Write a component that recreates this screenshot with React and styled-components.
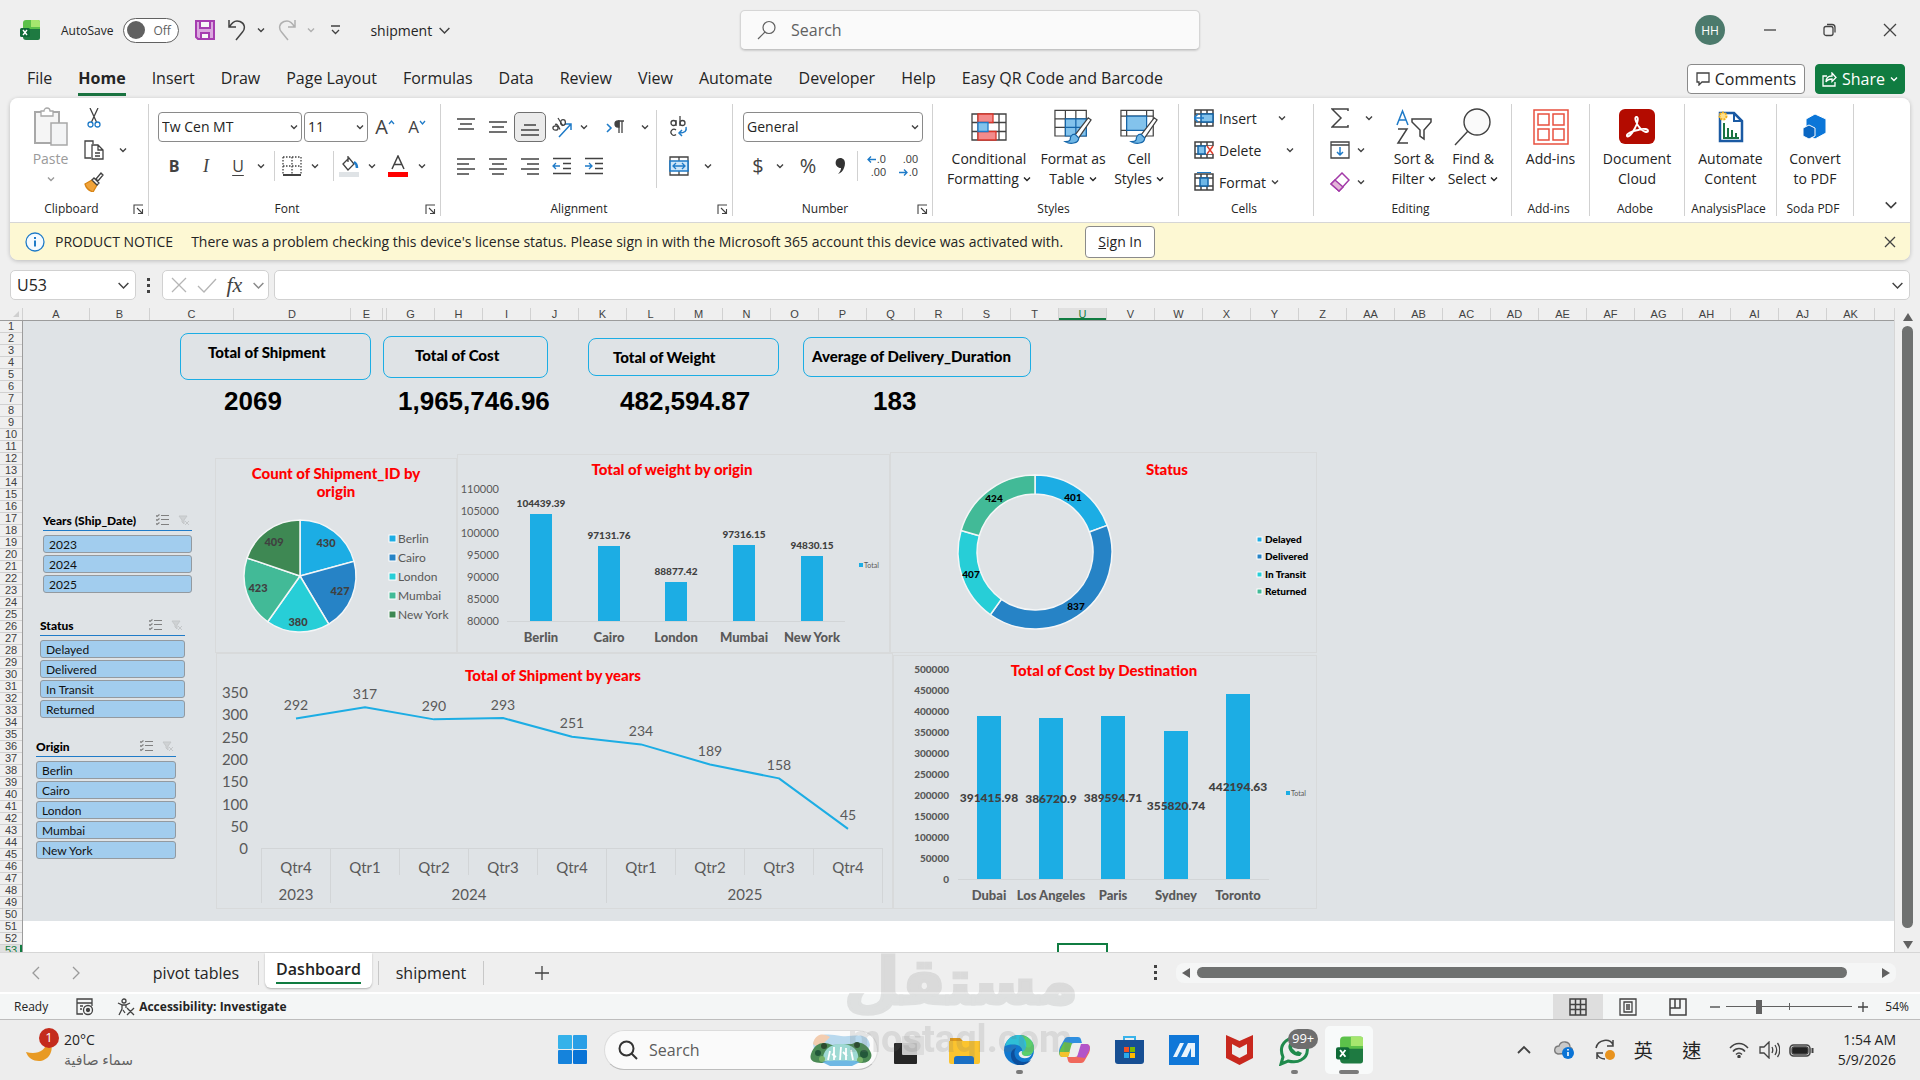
import React from "react";
import styled, { createGlobalStyle, css } from "styled-components";

const UI = '"Open Sans", "Noto Sans", "DejaVu Sans", "Noto Sans CJK TC", sans-serif';
const GEO = 'Lato, "Open Sans", sans-serif';

const Global = createGlobalStyle`
  *, *::before, *::after { box-sizing: border-box; }
  body { margin: 0; background: #efefef; color: #242424; font-family: ${UI}; font-size: 12px; overflow: hidden; }
  button, input, select { font: inherit; color: inherit; margin: 0; }
  button { background: none; border: 0; padding: 0; cursor: pointer; }
  h1, h2, ul { margin: 0; padding: 0; font-weight: inherit; list-style: none; }
  svg { display: block; flex: none; }
`;

const Page = styled.div`
  display: flex;
  flex-direction: column;
  height: 100vh;
  background: #efefef;
`;

/* ---------- shared icons ---------- */
const Svg = ({ w = 20, h = w, box, children, ...rest }) => (
  <svg width={w} height={h} viewBox={box || `0 0 ${w} ${h}`} fill="none" stroke="#424242" strokeWidth="1.3" aria-hidden="true" {...rest}>
    {children}
  </svg>
);
const Chev = ({ w = 8, color = "#424242" }) => (
  <Svg w={w} h={w} box="0 0 8 8" stroke={color} strokeWidth={w > 8 ? 0.9 : 1.4}>
    <path d="M1 2.5 4 5.5 7 2.5" />
  </Svg>
);
const ExcelLogo = ({ w = 20, h = 20 }) => (
  <Svg w={w} h={h} box="0 0 20 20" stroke="none">
    <path d="M6 0h12a2 2 0 0 1 2 2v9H3V3a3 3 0 0 1 3-3z" fill="#5cc14a" />
    <path d="M11 0h7a2 2 0 0 1 2 2v5h-9z" fill="#a6e66e" />
    <path d="M3 9h17v9a2 2 0 0 1-2 2H6a3 3 0 0 1-3-3z" fill="#1e7a41" />
    <rect x="0" y="8" width="10" height="9" rx="1.5" fill="#0f6a37" />
    <path d="M3 10l4 5M7 10l-4 5" stroke="#fff" strokeWidth="1.4" />
  </Svg>
);
const Undo = ({ color = "#424242", flip }) => (
  <Svg w={20} h={22} stroke={color} strokeWidth="1.5">
    <g transform={flip ? "matrix(-1 0 0 1 20 0)" : undefined}>
      <path d="M2 1v7h7M2.500 8C5 3 9 1 13 2.500c5 2 5.500 7 2.500 10.500L9 21" />
    </g>
  </Svg>
);
const HLines = ({ rows }) => (
  <Svg w={20} h={20} strokeWidth="1.4">
    {rows.map(([a, b, y]) => <path key={y} d={`M${a} ${y}H${b}`} />)}
  </Svg>
);

/* ---------- title bar ---------- */
const TitleBar = styled.header`
  display: grid;
  grid-template-columns: 1fr 460px 1fr;
  align-items: center;
  height: 60px;
  padding-left: 20px;
`;
const Quick = styled.div`
  display: flex;
  align-items: center;
  gap: 12px;
`;
const AutoSave = styled.label`
  display: flex;
  align-items: center;
  gap: 10px;
  margin: 0 4px 0 9px;
`;
const SwitchBox = styled.span`
  display: flex;
  align-items: center;
  gap: 8px;
  width: 56px;
  height: 25px;
  padding: 0 3px;
  border: 1px solid #616161;
  border-radius: 13px;
  background: #fff;
  color: #616161;
  input {
    appearance: none;
    width: 18px;
    height: 18px;
    border-radius: 50%;
    background: #616161;
  }
`;
const QuickButton = styled.button`
  display: flex;
  align-items: center;
  gap: 10px;
`;
const DocName = styled.button`
  display: flex;
  align-items: center;
  gap: 6px;
  margin-left: 11px;
  font-size: 14px;
`;
const SearchBox = styled.label`
  display: flex;
  align-items: center;
  gap: 14px;
  height: 40px;
  padding: 0 16px;
  border: 1px solid #d6d6d6;
  border-bottom-color: #c4c4c4;
  border-radius: 5px;
  background: #fafafa;
  box-shadow: 0 1px 2px rgba(0, 0, 0, 0.14);
  input {
    flex: 1;
    padding: 0;
    border: 0;
    outline: 0;
    background: none;
    font-size: 16px;
  }
  input::placeholder { color: #616161; opacity: 1; }
`;
const WindowTools = styled.div`
  display: flex;
  justify-content: flex-end;
  align-items: center;
`;
const Avatar = styled.button`
  width: 30px;
  height: 30px;
  margin-right: 15px;
  border-radius: 50%;
  background: #4c7a6c;
  color: #fff;
  font-size: 12px;
`;
const WindowButton = styled.button`
  display: flex;
  align-items: center;
  justify-content: center;
  width: 60px;
  height: 40px;
`;

/* ---------- menu tabs ---------- */
const TabBar = styled.nav`
  display: flex;
  align-items: center;
  height: 38px;
  padding: 0 15px 0 27px;
  gap: 26px;
`;
const MenuTab = styled.button`
  height: 34px;
  padding: 0;
  border-bottom: 3px solid ${(p) => (p.$active ? "#1a7340" : "transparent")};
  font-size: 16px;
  line-height: 32px;
  font-weight: ${(p) => (p.$active ? 700 : 400)};
  white-space: nowrap;
`;
const TabActions = styled.div`
  display: flex;
  gap: 10px;
  margin-left: auto;
`;
const ActionButton = styled.button`
  display: flex;
  align-items: center;
  justify-content: center;
  gap: 5px;
  width: ${(p) => (p.$primary ? 90 : 118)}px;
  height: 30px;
  border: 1px solid ${(p) => (p.$primary ? "#107c41" : "#8a8a8a")};
  border-radius: 4px;
  background: ${(p) => (p.$primary ? "#107c41" : "#fff")};
  color: ${(p) => (p.$primary ? "#fff" : "#242424")};
  font-size: 16px;
`;

/* ---------- ribbon ---------- */
const RibbonShell = styled.section`
  margin: 0 10px;
  border-radius: 8px;
  box-shadow: 0 1px 4px rgba(0, 0, 0, 0.22);
  overflow: hidden;
`;
const Ribbon = styled.div`
  display: flex;
  height: 124px;
  padding: 6px 0;
  background: #fff;
`;
const Group = styled.div`
  display: flex;
  flex-direction: column;
  flex: none;
  width: ${(p) => p.$w}px;
  border-right: 1px solid #d1d1d1;
`;
const GroupBody = styled.div`
  display: flex;
  flex: 1;
  justify-content: ${(p) => (p.$center ? "center" : "flex-start")};
  padding-left: ${(p) => p.$pad || 0}px;
`;
const GroupLabel = styled.div`
  display: flex;
  justify-content: center;
  align-items: center;
  height: 14px;
  padding-right: 4px;
  font-size: 12px;
  line-height: 14px;
  span { flex: 1; text-align: center; }
`;
const RibbonEnd = styled.div`
  display: flex;
  flex: 1;
  justify-content: flex-end;
  align-items: flex-end;
  padding: 0 12px 4px 0;
`;
const Stack = styled.div`
  display: flex;
  flex-direction: column;
  gap: ${(p) => p.$gap || 0}px;
  padding-top: ${(p) => p.$top || 0}px;
`;
const Line = styled.div`
  display: flex;
  align-items: center;
  height: ${(p) => p.$h || 39}px;
`;
const Tool = styled.button`
  display: flex;
  align-items: center;
  justify-content: ${(p) => (p.$start ? "flex-start" : "center")};
  gap: ${(p) => p.$gap || 0}px;
  flex: none;
  width: ${(p) => p.$w || 32}px;
  height: 30px;
  font-size: 14px;
  white-space: nowrap;
  ${(p) => p.$on && css`
    border: 1px solid #707070;
    border-radius: 5px;
    background: #ebebeb;
  `}
`;
const Glyph = styled.span`
  font-size: ${(p) => p.$size || 16}px;
  line-height: 20px;
  font-weight: ${(p) => (p.$bold ? 700 : 400)};
  font-style: ${(p) => (p.$italic ? "italic" : "normal")};
  font-family: ${(p) => (p.$serif ? '"Liberation Serif", serif' : "inherit")};
  text-decoration: ${(p) => (p.$underline ? "underline" : "none")};
  text-underline-offset: 3px;
  color: #424242;
`;
const Rule = styled.i`
  width: 1px;
  height: ${(p) => p.$h || 30}px;
  margin: 0 6px;
  background: #d1d1d1;
`;
const Combo = styled.label`
  display: flex;
  align-items: center;
  flex: none;
  width: ${(p) => p.$w}px;
  height: 30px;
  margin-right: 2px;
  padding: 0 3px;
  border: 1px solid #8a8a8a;
  border-radius: 4px;
  background: #fff;
  select {
    flex: 1;
    min-width: 0;
    appearance: none;
    border: 0;
    outline: 0;
    padding: 0;
    background: none;
    font-size: 14px;
  }
`;
const BigTool = styled.button`
  display: flex;
  flex-direction: column;
  align-items: center;
  flex: none;
  width: ${(p) => p.$w}px;
  height: 86px;
  font-size: 14px;
  line-height: 20px;
  color: ${(p) => (p.$off ? "#9a9a9a" : "#242424")};
`;
const BigIcon = styled.span`
  display: flex;
  align-items: center;
  justify-content: center;
  height: 45px;
`;
const WithChev = styled.span`
  display: flex;
  align-items: center;
  gap: 4px;
  height: 20px;
  white-space: nowrap;
`;

const Launcher = () => (
  <Svg w={11} h={11} strokeWidth="1.1">
    <path d="M1 10V1h9M4 4l5.500 5.500M9.500 5v4.500H5" />
  </Svg>
);
const RibbonGroup = ({ w, pad, center, label, launch, children }) => (
  <Group $w={w}>
    <GroupBody $pad={pad} $center={center}>{children}</GroupBody>
    <GroupLabel>
      <span>{label}</span>
      {launch && <button aria-label={`${label} settings`}><Launcher /></button>}
    </GroupLabel>
  </Group>
);
const ChevTool = ({ w = 20, label }) => (
  <Tool $w={w} aria-label={label}><Chev /></Tool>
);
const Big = ({ w, icon, a, b, chev, off }) => (
  <BigTool $w={w} $off={off}>
    <BigIcon>{icon}</BigIcon>
    <span>{a}</span>
    {(b || chev) && <WithChev>{b}{chev && <Chev color={off ? "#9a9a9a" : "#242424"} />}</WithChev>}
  </BigTool>
);

const PasteIcon = () => (
  <Svg w={34} h={40} stroke="#a8a8a8">
    <path d="M1 5h24v31H1z" fill="#f5f5f5" strokeWidth="2" />
    <path d="M7 9V4h3a3 3 0 0 1 6 0h3v5z" fill="#fff" />
    <path d="M17 16h16v22H17z" fill="#f3f4f5" strokeWidth="1.500" />
  </Svg>
);
const CutIcon = () => (
  <Svg w={14} h={20}>
    <path d="M3 0l6.500 14M11 0L4.500 14" />
    <circle cx="3.500" cy="16.500" r="2.500" stroke="#1f7bc8" />
    <circle cx="10.500" cy="16.500" r="2.500" stroke="#1f7bc8" />
  </Svg>
);
const CopyIcon = () => (
  <Svg w={20} h={20}>
    <path d="M7 18H1V1h8v3" />
    <path d="M8 5h6l5 5v9H8zM14 5v5h5M11 13h5M11 16h5" fill="#fff" />
  </Svg>
);
const BrushIcon = () => (
  <Svg w={20} h={20}>
    <path d="M1 12l7-4 5 5-4 7c-3-1-7-4-8-8z" fill="#f0a33a" stroke="#d88414" />
    <path d="M8 8l2-2 5 5-2 2zM12 7l5-6 2 2-5 6z" fill="#fff" />
  </Svg>
);
const GridIcon = () => (
  <Svg w={20} h={20} strokeDasharray="1.500 1.500">
    <path d="M1 1h18v17M1 1v17M10 1v17M1 10h18" />
    <path d="M1 19h18" strokeDasharray="none" strokeWidth="2" />
  </Svg>
);
const FillIcon = () => (
  <Svg w={20} h={22}>
    <path d="M4 9l6-6 5 6-6 6zM9 1v6" />
    <path d="M15 7c2 1 3 4 3 6" stroke="#1f7bc8" strokeWidth="2.500" />
    <path d="M0 17h20v5H0z" fill="#dfe3e6" stroke="none" />
  </Svg>
);
const FontColorIcon = () => (
  <Svg w={20} h={22}>
    <path d="M4 14L10 1l6 13M6 9.500h8" strokeWidth="1.500" />
    <path d="M0 17h20v5H0z" fill="#ff0000" stroke="none" />
  </Svg>
);
const OrientIcon = () => (
  <Svg w={22} h={22}>
    <path d="M8 21L20 8M20 14V8h-6" stroke="#1f7bc8" strokeWidth="1.500" />
    <ellipse cx="4.500" cy="12" rx="2.600" ry="2.200" />
    <path d="M4 8.500c2-1 3 1 5 5" />
    <path d="M7 2l5 8" />
    <ellipse cx="12" cy="6.500" rx="2.400" ry="2.800" />
  </Svg>
);
const ParaIcon = () => (
  <Svg w={18} h={18}>
    <path d="M1 6l4 4-4 4" stroke="#1f7bc8" strokeWidth="1.600" />
    <path d="M12 3a3 3 0 0 0 0 6h1V3z" fill="#424242" />
    <path d="M18 3h-6M13 3v12M16 3v12" />
  </Svg>
);
const WrapIcon = () => (
  <Svg w={20} h={22}>
    <circle cx="4.500" cy="7" r="2.500" /><path d="M7 4v6M11 0v10" />
    <circle cx="13.500" cy="7" r="2.500" /><path d="M7 14a3 3 0 1 0 0 4.500" />
    <path d="M17 11c1 4-1 6-7 6M13 14l-3 3 3 3" stroke="#1f7bc8" strokeWidth="1.500" />
  </Svg>
);
const MergeIcon = () => (
  <Svg w={20} h={20}>
    <path d="M1 1h18v18H1zM10 1v4M10 15v4" />
    <path d="M1 5h18v10H1z" fill="#cfe6f8" stroke="#1f7bc8" strokeWidth="1.600" />
    <path d="M4 10h12M7 7l-3 3 3 3M13 7l3 3-3 3" stroke="#1f7bc8" />
  </Svg>
);
const IndentIcon = ({ right }) => (
  <Svg w={20} h={20}>
    <path d="M1 2.500h18M11 7.500h8M11 12.500h8M1 17.500h18" />
    <path d={right ? "M1 10h7M5 7l3 3-3 3" : "M8 10H1M4 7l-3 3 3 3"} stroke="#1f7bc8" />
  </Svg>
);
const DecimalMark = styled.span`
  display: grid;
  font: 11px/13px "Liberation Sans", sans-serif;
  color: #424242;
  span {
    display: flex;
    align-items: center;
    justify-content: flex-end;
    gap: 1px;
    width: 20px;
    height: 13px;
  }
`;
const SmallArrow = ({ right }) => (
  <Svg w={9} h={9} stroke="#1f7bc8"><path d={right ? "M0 4.500h8M5 1.500l3 3-3 3" : "M9 4.500H1M4 1.500l-3 3 3 3"} /></Svg>
);
const CondIcon = () => (
  <Svg w={36} h={28}>
    <path d="M1 1h34v26H1zM7 1v26M14 1v26M28 1v26M1 9.500h34M1 18.500h34" />
    <path d="M7 1h15v8.500H7zM7 18.500h18V27H7z" fill="#f28b8b" stroke="#d9362b" />
    <path d="M7 9.500h10v9H7z" fill="#83c3ec" stroke="#1f7bc8" />
  </Svg>
);
const BrushOver = () => (
  <g>
    <path d="M36 9L22 27l4 3L39 11z" fill="#fff" />
    <path d="M22 26c-4 0-5 4-5 6-1 2-3 2-5 2 5 3 14 2 14-4z" fill="#6fb7e6" stroke="#1565a8" />
  </g>
);
const TableIcon = () => (
  <Svg w={38} h={35} box="0 0 40 36">
    <path d="M1 1h33v27H1zM12 1v27M23 1v27M1 10h33M1 19h33" />
    <path d="M12 10h22v18H12z" fill="#83c3ec" stroke="#1565a8" />
    <path d="M23 10v18M12 19h22" stroke="#1565a8" />
    <BrushOver />
  </Svg>
);
const CellIcon = () => (
  <Svg w={38} h={35} box="0 0 40 36">
    <path d="M1 1h34v27H1zM7 1v27M1 7h34M28 1v6M1 22h8" />
    <path d="M7 7h21v15H7z" fill="#83c3ec" stroke="#1565a8" />
    <BrushOver />
  </Svg>
);
const CellsRow = ({ kind }) => (
  <Svg w={20} h={20} strokeWidth="1.500">
    <path d="M1 2h18v16H1zM7 2v4M13 2v4M7 14v4M13 14v4M1 6h18M1 14h18" />
    {kind === "insert" && <path d="M7 6h12v8H7z" fill="#83c3ec" stroke="#1565a8" />}
    {kind === "insert" && <path d="M10 10H1M4 6l-4 4 4 4" stroke="#1f7bc8" />}
    {kind === "delete" && <path d="M12 6h9v8h-9z" fill="#fff" stroke="none" />}
    {kind === "delete" && <path d="M4 6h7v8H4z" fill="#83c3ec" stroke="#1565a8" />}
    {kind === "delete" && <path d="M13 6l6 8M19 6l-6 8" stroke="#e0402f" />}
    {kind === "format" && <path d="M6 6h8v8H6z" fill="#6fb7e6" stroke="#1565a8" />}
    {kind === "format" && <path d="M3 0h14" stroke="#1f7bc8" strokeWidth="2" />}
  </Svg>
);
const SortIcon = () => (
  <Svg w={36} h={36} strokeWidth="1.500">
    <path d="M1 16L6.500 2 12 16M3 11h7" stroke="#1f7bc8" />
    <path d="M2 20h9L2 34h10" />
    <path d="M16 10h19v3l-7 8v9l-4-3v-6l-8-8z" />
  </Svg>
);
const FindIcon = () => (
  <Svg w={38} h={38} strokeWidth="1.400">
    <circle cx="23" cy="14" r="13" fill="#fafafa" />
    <path d="M14 23L1 37" />
  </Svg>
);
const AddinsIcon = () => (
  <Svg w={36} h={36} stroke="#e8503f" strokeWidth="1.500">
    <path d="M1 1h34v34H1zM5 5h11v11H5zM20 5h11v11H20zM5 20h11v11H5zM20 20h11v11H20z" />
  </Svg>
);
const AcrobatIcon = () => (
  <Svg w={36} h={35}>
    <rect width="36" height="35" rx="6" fill="#b30b00" stroke="none" />
    <path d="M17 8c3-1 2 6-1 11-3 6-7 10-8 8s5-5 11-6c6-2 10-1 10 1s-5 1-8-3c-3-3-6-10-4-11z" stroke="#fff" strokeWidth="1.900" />
  </Svg>
);
const AutomateIcon = () => (
  <Svg w={26} h={32}>
    <path d="M2 2h14l8 8v20H2z" fill="#fff" stroke="#1b5aa3" strokeWidth="2.500" />
    <path d="M16 2v8h8" stroke="#1b5aa3" strokeWidth="2" />
    <path d="M6 12v15h15M10 27V17M14 27v-8M18 27v-5" stroke="#1a7340" strokeWidth="2" />
    <circle cx="5" cy="5" r="3.500" fill="#ffe08a" stroke="#f2b01e" strokeWidth="2" strokeDasharray="2 1" />
  </Svg>
);
const SodaIcon = () => (
  <Svg w={26} h={28} stroke="#fff" strokeWidth="1">
    <path d="M13 1l11 5v14l-11 6-9-5V6z" fill="#0b76d8" />
    <path d="M7 12l6 3v8l-6 3-6-3v-8z" fill="#0a66c2" />
  </Svg>
);

const RibbonBar = () => (
  <Ribbon>
    <RibbonGroup w={139} pad={7} label="Clipboard" launch>
      <Big w={67} off icon={<PasteIcon />} a="Paste" chev />
      <Stack $gap={4}>
        {[["Cut", <CutIcon key="c" />], ["Copy", <CopyIcon key="p" />], ["Format painter", <BrushIcon key="b" />]].map(([n, ic]) => (
          <Line key={n} $h={28}>
            <Tool $w={20} aria-label={n}>{ic}</Tool>
            {n === "Copy" && <ChevTool w={38} label="Copy options" />}
          </Line>
        ))}
      </Stack>
    </RibbonGroup>

    <RibbonGroup w={292} pad={9} label="Font" launch>
      <Stack $top={3}>
        <Line>
          <Combo $w={144}><select aria-label="Font"><option>Tw Cen MT</option></select><Chev /></Combo>
          <Combo $w={64}><select aria-label="Font size"><option>11</option></select><Chev /></Combo>
          <Tool $w={30} aria-label="Grow font"><Glyph $size={20}>A</Glyph><Svg w={7} h={16} stroke="#1f7bc8"><path d="M1 5l2.500-3L6 5" /></Svg></Tool>
          <Tool $w={34} aria-label="Shrink font"><Glyph $size={17}>A</Glyph><Svg w={7} h={16} stroke="#1f7bc8"><path d="M1 2l2.500 3L6 2" /></Svg></Tool>
        </Line>
        <Line>
          <Tool aria-label="Bold"><Glyph $bold>B</Glyph></Tool>
          <Tool aria-label="Italic"><Glyph $italic $serif $size={18}>I</Glyph></Tool>
          <Tool aria-label="Underline"><Glyph $underline>U</Glyph></Tool>
          <ChevTool w={14} label="Underline options" />
          <Rule />
          <Tool $w={22} aria-label="Borders"><GridIcon /></Tool>
          <ChevTool w={24} label="Border options" />
          <Rule $h={30} />
          <Tool $w={18} aria-label="Fill colour"><FillIcon /></Tool>
          <ChevTool w={28} label="Fill options" />
          <Tool $w={24} aria-label="Font colour"><FontColorIcon /></Tool>
          <ChevTool w={24} label="Font colour options" />
        </Line>
      </Stack>
    </RibbonGroup>

    <RibbonGroup w={292} pad={9} label="Alignment" launch>
      <Stack $top={3}>
        <Line>
          <Tool aria-label="Top align"><HLines rows={[[1, 19, 2], [4, 16, 7], [2, 18, 12]]} /></Tool>
          <Tool aria-label="Middle align"><HLines rows={[[1, 19, 5], [4, 16, 10], [1, 19, 15]]} /></Tool>
          <Tool $on aria-label="Bottom align"><HLines rows={[[4, 16, 8], [1, 19, 13], [1, 19, 18]]} /></Tool>
          <Tool aria-label="Orientation"><OrientIcon /></Tool>
          <ChevTool w={12} label="Orientation options" />
          <Tool $w={50} aria-label="Text direction"><ParaIcon /></Tool>
          <ChevTool w={10} label="Direction options" />
        </Line>
        <Line>
          <Tool aria-label="Align left"><HLines rows={[[1, 19, 3], [1, 13, 8], [1, 19, 13], [1, 13, 18]]} /></Tool>
          <Tool aria-label="Centre"><HLines rows={[[1, 19, 3], [4, 16, 8], [1, 19, 13], [4, 16, 18]]} /></Tool>
          <Tool aria-label="Align right"><HLines rows={[[1, 19, 3], [7, 19, 8], [1, 19, 13], [7, 19, 18]]} /></Tool>
          <Tool aria-label="Decrease indent"><IndentIcon /></Tool>
          <Tool aria-label="Increase indent"><IndentIcon right /></Tool>
        </Line>
      </Stack>
      <Stack $top={6}><Rule $h={78} /></Stack>
      <Stack $top={3}>
        <Line><Tool aria-label="Wrap text"><WrapIcon /></Tool></Line>
        <Line><Tool aria-label="Merge cells"><MergeIcon /></Tool><ChevTool w={26} label="Merge options" /></Line>
      </Stack>
    </RibbonGroup>

    <RibbonGroup w={200} pad={10} label="Number" launch>
      <Stack $top={3}>
        <Line>
          <Combo $w={180}><select aria-label="Number format"><option>General</option></select><Chev /></Combo>
        </Line>
        <Line>
          <Tool $w={30} aria-label="Currency"><Glyph $size={20}>$</Glyph></Tool>
          <ChevTool w={14} label="Currency options" />
          <Tool $w={42} aria-label="Percent"><Glyph $size={20}>%</Glyph></Tool>
          <Tool $w={22} aria-label="Comma"><Svg w={10} h={18} stroke="none"><path d="M5 1c5 0 6 5 4 10-1 3-3 5-6 6 2-2 3-4 3-6C-1 11-1 1 5 1z" fill="#333" /></Svg></Tool>
          <Rule />
          <Tool $w={24} aria-label="Increase decimal"><DecimalMark><span><SmallArrow />.0</span><span>.00</span></DecimalMark></Tool>
          <Tool $w={40} aria-label="Decrease decimal"><DecimalMark><span>.00</span><span><SmallArrow right />.0</span></DecimalMark></Tool>
        </Line>
      </Stack>
    </RibbonGroup>

    <RibbonGroup w={246} pad={8} label="Styles">
      <Big w={96} icon={<CondIcon />} a="Conditional" b="Formatting" chev />
      <Big w={72} icon={<TableIcon />} a="Format as" b="Table" chev />
      <Big w={60} icon={<CellIcon />} a="Cell" b="Styles" chev />
    </RibbonGroup>

    <RibbonGroup w={135} pad={15} label="Cells">
      <Stack $gap={4}>
        <Line $h={28}><Tool $w={84} $start $gap={5}><CellsRow kind="insert" />Insert</Tool><Chev /></Line>
        <Line $h={28}><Tool $w={92} $start $gap={5}><CellsRow kind="delete" />Delete</Tool><Chev /></Line>
        <Line $h={28}><Tool $w={90} $start $gap={5}><CellsRow kind="format" />Format<Chev /></Tool></Line>
      </Stack>
    </RibbonGroup>

    <RibbonGroup w={198} pad={16} label="Editing">
      <Stack $gap={4}>
        <Line $h={28}><Tool $w={20} aria-label="AutoSum"><Svg w={18} h={20} strokeWidth="1.500"><path d="M17 3V1H1l9 9-9 9h16v-2" /></Svg></Tool><ChevTool w={38} label="AutoSum options" /></Line>
        <Line $h={28}><Tool $w={20} aria-label="Fill"><Svg w={20} h={18}><path d="M1 1h18v16H1zM1 4h18" /><path d="M10 6v8M7 11l3 3 3-3" stroke="#1f7bc8" strokeWidth="1.500" /></Svg></Tool><ChevTool w={22} label="Fill options" /></Line>
        <Line $h={28}><Tool $w={20} aria-label="Clear"><Svg w={20} h={20} stroke="#a33aa8" strokeWidth="1.500"><path d="M12 1l7 7-10 11-8-7z" /><path d="M5 8l8 7-4 4-8-7z" fill="#e3b5d8" /></Svg></Tool><ChevTool w={22} label="Clear options" /></Line>
      </Stack>
      <Big w={52} icon={<SortIcon />} a="Sort &" b="Filter" chev />
      <Big w={66} icon={<FindIcon />} a="Find &" b="Select" chev />
    </RibbonGroup>

    <RibbonGroup w={78} center label="Add-ins"><Big w={76} icon={<AddinsIcon />} a="Add-ins" /></RibbonGroup>
    <RibbonGroup w={95} center label="Adobe"><Big w={90} icon={<AcrobatIcon />} a="Document" b="Cloud" /></RibbonGroup>
    <RibbonGroup w={92} center label="AnalysisPlace"><Big w={90} icon={<AutomateIcon />} a="Automate" b="Content" /></RibbonGroup>
    <RibbonGroup w={77} center label="Soda PDF"><Big w={76} icon={<SodaIcon />} a="Convert" b="to PDF" /></RibbonGroup>
    <RibbonEnd><button aria-label="Collapse ribbon"><Chev w={14} /></button></RibbonEnd>
  </Ribbon>
);

/* ---------- notice and formula bar ---------- */
const Notice = styled.div`
  display: flex;
  align-items: center;
  height: 38px;
  padding: 0 14px 0 15px;
  border-top: 1px solid #d6d6d6;
  background: #fdf8d3;
  font-size: 14px;
`;
const NoticeHead = styled.strong`
  margin: 0 18px 0 10px;
  font-weight: 400;
`;
const SignIn = styled.button`
  width: 70px;
  height: 32px;
  margin: 0 auto 0 22px;
  border: 1px solid #8a8a8a;
  border-radius: 4px;
  background: #fff;
`;
const FormulaBar = styled.div`
  display: flex;
  align-items: center;
  height: 30px;
  margin: 10px 10px 8px;
`;
const Field = styled.label`
  display: flex;
  align-items: center;
  flex: ${(p) => (p.$w ? "none" : 1)};
  width: ${(p) => (p.$w ? `${p.$w}px` : "auto")};
  height: 30px;
  padding: 0 5px 0 6px;
  border: 1px solid #d1d1d1;
  border-radius: 5px;
  background: #fff;
  input {
    flex: 1;
    min-width: 0;
    border: 0;
    outline: 0;
    padding: 0;
    background: none;
    font-size: 16px;
  }
`;
const FxBox = styled.div`
  display: flex;
  align-items: center;
  justify-content: space-between;
  width: 107px;
  height: 30px;
  margin-right: 5px;
  padding: 0 3px 0 8px;
  border: 1px solid #d1d1d1;
  border-radius: 5px;
  background: #fff;
`;
const Dots = styled.span`
  display: grid;
  gap: 3px;
  margin: 0 ${(p) => p.$r || 12}px 0 11px;
  i { width: 3px; height: 3px; background: #424242; }
`;

/* ---------- worksheet ---------- */
const ROW = 12;
const HEAD = 23;
const COLS = [["A", 67], ["B", 60], ["C", 84], ["D", 117], ["E", 32], ["", 4]].concat(
  ["G", "H", "I", "J", "K", "L", "M", "N", "O", "P", "Q", "R", "S", "T", "U", "V", "W", "X", "Y", "Z",
    "AA", "AB", "AC", "AD", "AE", "AF", "AG", "AH", "AI", "AJ", "AK"].map((c) => [c, 48])
);
const SELECTED_LEFT = COLS.slice(0, COLS.findIndex(([c]) => c === "U")).reduce((s, [, w]) => s + w, 0);

const Work = styled.main`
  display: flex;
  flex: 1;
  min-height: 0;
`;
const Sheet = styled.section`
  display: flex;
  flex-direction: column;
  flex: 1;
  min-width: 0;
  border-right: 1px solid #d6d6d6;
`;
const ColumnHeads = styled.div`
  display: flex;
  flex: none;
  height: 13px;
  overflow: hidden;
  border-bottom: 1px solid #9c9c9c;
`;
const Corner = styled.div`
  display: flex;
  align-items: flex-end;
  justify-content: flex-end;
  flex: none;
  width: ${HEAD}px;
  padding: 0 3px 3px 0;
  border-right: 1px solid #d1d1d1;
`;
const HeadCell = styled.div`
  flex: none;
  width: ${(p) => p.$w}px;
  border-right: 1px solid #d1d1d1;
  font: 11px/12px "Liberation Sans", sans-serif;
  text-align: center;
  color: ${(p) => (p.$on ? "#107c41" : "#424242")};
  background: ${(p) => (p.$on ? "#e0e0e0" : "transparent")};
  box-shadow: ${(p) => (p.$on ? "inset 0 -2px #107c41" : "none")};
`;
const SheetBody = styled.div`
  display: flex;
  flex: 1;
  min-height: 0;
  overflow: hidden;
`;
const RowHeads = styled.div`
  flex: none;
  width: ${HEAD}px;
  border-right: 1px solid #9c9c9c;
`;
const RowCell = styled.div`
  height: ${ROW}px;
  border-bottom: 1px solid #d1d1d1;
  font: 11px/11px "Liberation Sans", sans-serif;
  text-align: center;
  color: ${(p) => (p.$on ? "#107c41" : "#424242")};
  background: ${(p) => (p.$on ? "#e0e0e0" : "transparent")};
  box-shadow: ${(p) => (p.$on ? "inset -2px 0 #107c41" : "none")};
`;
const Cells = styled.div`
  position: relative;
  flex: 1;
  min-width: 0;
  overflow: hidden;
  background: #fff;
`;
const Filled = styled.div`
  display: flex;
  height: ${ROW * 50}px;
  background: #dfe3e6;
`;
const ActiveCell = styled.div`
  position: absolute;
  top: ${ROW * 52 - 2}px;
  left: ${SELECTED_LEFT - 2}px;
  width: 51px;
  height: 16px;
  border: 2px solid #107c41;
`;
const SlicerColumn = styled.aside`
  flex: none;
  width: 157px;
  padding: 189px 0 0 13px;
`;
const SlicerBox = styled.section`
  width: ${(p) => p.$w}px;
  margin: 0 0 ${(p) => p.$after}px ${(p) => p.$indent}px;
  font-family: ${GEO};
`;
const SlicerHead = styled.div`
  display: flex;
  align-items: center;
  gap: 9px;
  height: 21px;
  margin-bottom: 4px;
  padding-right: 1px;
  border-bottom: 1px solid #1f7bc8;
  h2 {
    flex: 1;
    color: #000;
    font-size: 12px;
    font-weight: 900;
    white-space: nowrap;
  }
`;
const SlicerItem = styled.button`
  display: block;
  width: 100%;
  height: 18px;
  margin-bottom: 2px;
  padding-left: 5px;
  border: 1px solid #939aa0;
  border-radius: 3px;
  background: #a2cdee;
  font-size: 12px;
  line-height: 15px;
  text-align: left;
  color: #111;
`;
const Slicer = ({ title, items, indent, w, after }) => (
  <SlicerBox $w={w} $indent={indent} $after={after}>
    <SlicerHead>
      <h2>{title}</h2>
      <button aria-label="Multi-select">
        <Svg w={13} h={12} stroke="#808080" strokeWidth="1.200"><path d="M0 1.500l1 1 2.500-2M0 5.500l1 1 2.500-2M0 9.500l1 1 2.500-2M5 1.500h8M5 5.500h8M5 10.500h8" /></Svg>
      </button>
      <button aria-label="Clear filter">
        <Svg w={13} h={11} stroke="#c4c7c9" strokeWidth="1"><path d="M1 1h8L6 5v4L4 7V5z" fill="#cfd2d4" /><path d="M7 6l4 4M11 6l-4 4" /></Svg>
      </button>
    </SlicerHead>
    {items.map((t) => <SlicerItem key={t}>{t}</SlicerItem>)}
  </SlicerBox>
);

const Board = styled.div`
  padding-top: 12px;
`;
const KpiRow = styled.ul`
  display: flex;
  height: 119px;
`;
const Kpi = styled.li`
  flex: none;
  width: ${(p) => p.$w}px;
  margin-right: ${(p) => p.$gap}px;
`;
const KpiSlot = styled.div`
  display: flex;
  align-items: center;
  height: 47px;
`;
const KpiLabel = styled.div`
  width: 100%;
  height: ${(p) => p.$h}px;
  padding: 8px 0 0 ${(p) => p.$pad}px;
  border: 1px solid #1cade4;
  border-radius: 8px;
  font: 900 15px/20px ${GEO};
  color: #000;
  white-space: nowrap;
`;
const KpiValue = styled.div`
  padding: 6px 0 0 ${(p) => p.$pad}px;
  font: 700 26px/30px "Liberation Sans", sans-serif;
  color: #000;
`;
const KPIS = [
  { label: "Total of Shipment", value: "2069", w: 191, h: 47, pad: 27, vpad: 44, gap: 12 },
  { label: "Total of Cost", value: "1,965,746.96", w: 165, h: 42, pad: 31, vpad: 15, gap: 40 },
  { label: "Total of Weight", value: "482,594.87", w: 191, h: 38, pad: 24, vpad: 32, gap: 24 },
  { label: "Average of Delivery_Duration", value: "183", w: 228, h: 40, pad: 8, vpad: 70, gap: 0 },
];
const ChartRow = styled.div`
  display: flex;
  align-items: flex-end;
  padding-left: ${(p) => p.$indent || 0}px;
`;
const ChartFrame = styled.figure`
  flex: none;
  margin: 0;
  border: 1px solid #d8dadb;
`;
const ChartSvg = styled.svg`
  font-family: ${GEO};
  text { dominant-baseline: central; fill: #595959; }
  .title { fill: #ff0000; font-weight: 900; font-size: 15px; text-anchor: middle; }
  .value { fill: #404040; font-weight: 900; text-anchor: middle; }
  .ink { fill: #000; font-weight: 900; }
`;
const Chart = ({ w, h, label, children }) => (
  <ChartFrame aria-label={label}>
    <ChartSvg width={w - 2} height={h - 2} viewBox={`1 1 ${w - 2} ${h - 2}`}>{children}</ChartSvg>
  </ChartFrame>
);

const polar = (cx, cy, r, t) => [cx + r * Math.sin(t * 2 * Math.PI), cy - r * Math.cos(t * 2 * Math.PI)];
const slices = (data) => {
  const total = data.reduce((s, d) => s + d.v, 0);
  let at = 0;
  return data.map((d) => {
    const from = at / total;
    at += d.v;
    return { ...d, from, to: at / total };
  });
};
const wedge = (cx, cy, r, r0, from, to) => {
  const big = to - from > 0.5 ? 1 : 0;
  const [a, b, c, d] = [polar(cx, cy, r, from), polar(cx, cy, r, to), polar(cx, cy, r0, to), polar(cx, cy, r0, from)];
  return `M${a} A${r} ${r} 0 ${big} 1 ${b} L${c} A${r0} ${r0} 0 ${big} 0 ${d} Z`;
};

const PIE = [
  { n: "Berlin", v: 430, c: "#1cade4", x: 111, y: 84 },
  { n: "Cairo", v: 427, c: "#2683c6", x: 125, y: 132 },
  { n: "London", v: 380, c: "#27ced7", x: 83, y: 163 },
  { n: "Mumbai", v: 423, c: "#42ba97", x: 43, y: 129 },
  { n: "New York", v: 409, c: "#3e8853", x: 59, y: 83 },
];
const PieChart = () => (
  <Chart w={242} h={195} label="Count of Shipment_ID by origin">
    <text className="title" x="121" y="15">Count of Shipment_ID by</text>
    <text className="title" x="121" y="33">origin</text>
    {slices(PIE).map((s) => (
      <path key={s.n} d={wedge(85, 118, 56, 0.01, s.from, s.to)} fill={s.c} stroke="#f4f6f7" strokeWidth="1.500" />
    ))}
    {PIE.map((s, i) => (
      <g key={s.n}>
        <text className="value" x={s.x} y={s.y} fontSize="11">{s.v}</text>
        <rect x="174" y={77 + i * 19} width="7" height="7" fill={s.c} stroke="#fff" strokeWidth="1" />
        <text x="183" y={80 + i * 19} fontSize="12">{s.n}</text>
      </g>
    ))}
  </Chart>
);

const RING = [
  { n: "Delayed", v: 401, c: "#1cade4", x: 183, y: 45 },
  { n: "Delivered", v: 837, c: "#2683c6", x: 186, y: 154 },
  { n: "In Transit", v: 407, c: "#27ced7", x: 81, y: 122 },
  { n: "Returned", v: 424, c: "#42ba97", x: 104, y: 46 },
];
const RingChart = () => (
  <Chart w={427} h={201} label="Status">
    <text className="title" x="277" y="17">Status</text>
    {slices(RING).map((s) => (
      <path key={s.n} d={wedge(145, 100, 77, 58, s.from, s.to)} fill={s.c} stroke="#f4f6f7" strokeWidth="1.500" />
    ))}
    {RING.map((s, i) => (
      <g key={s.n}>
        <text className="ink" x={s.x} y={s.y} textAnchor="middle" fontSize="10">{s.v}</text>
        <rect x="367" y={85 + Math.round(i * 17.3)} width="5" height="5" fill={s.c} stroke="#fff" strokeWidth="1" />
        <text className="ink" x="375" y={87 + Math.round(i * 17.3)} fontSize="10">{s.n}</text>
      </g>
    ))}
  </Chart>
);

const BarChart = ({ w, h, title, titleX, titleY, axis, bars, line, legend, boldAxis, labelSize, inside }) => (
  <Chart w={w} h={h} label={title}>
    {axis.ticks.map((t, i) => (
      <text key={t} x={axis.right} y={axis.top + i * axis.step} textAnchor="end" fontSize={boldAxis ? 10 : 11} fontWeight={boldAxis ? 900 : 400}>{t}</text>
    ))}
    <path d={`M${line[0]} ${line[2] + 0.5}H${line[1]}`} stroke="#d2d5d7" />
    {bars.map((b) => (
      <g key={b.n}>
        <rect x={b.x - b.w / 2} y={b.top} width={b.w} height={line[2] - b.top} fill="#1cade4" />
        <text className="value" x={b.x} y={inside ? (b.top + line[2]) / 2 : b.top - 11} fontSize={labelSize}>{b.v}</text>
        <text x={b.x} y={line[2] + 16} textAnchor="middle" fontSize="13" fontWeight="900">{b.n}</text>
      </g>
    ))}
    <text className="title" x={titleX} y={titleY}>{title}</text>
    <rect x={legend[0]} y={legend[1] - 2} width="4" height="4" fill="#1cade4" />
    <text x={legend[0] + 5} y={legend[1]} fontSize="7">Total</text>
  </Chart>
);

const WEIGHT = {
  w: 433, h: 199, title: "Total of weight by origin", titleX: 215, titleY: 15,
  axis: { ticks: [110000, 105000, 100000, 95000, 90000, 85000, 80000], right: 42, top: 34, step: 22 },
  line: [50, 388, 167], labelSize: 10, legend: [402, 111],
  bars: [
    { n: "Berlin", v: "104439.39", x: 84, w: 22, top: 60 },
    { n: "Cairo", v: "97131.76", x: 152, w: 22, top: 92 },
    { n: "London", v: "88877.42", x: 219, w: 22, top: 128 },
    { n: "Mumbai", v: "97316.15", x: 287, w: 22, top: 91 },
    { n: "New York", v: "94830.15", x: 355, w: 22, top: 102 },
  ],
};
const COST = {
  w: 424, h: 254, title: "Total of Cost by Destination", titleX: 211, titleY: 15, boldAxis: true, inside: true,
  axis: { ticks: [500000, 450000, 400000, 350000, 300000, 250000, 200000, 150000, 100000, 50000, 0], right: 56, top: 14, step: 21 },
  line: [65, 376, 224], labelSize: 12, legend: [393, 138],
  bars: [
    { n: "Dubai", v: "391415.98", x: 96, w: 24, top: 61 },
    { n: "Los Angeles", v: "386720.9", x: 158, w: 24, top: 63 },
    { n: "Paris", v: "389594.71", x: 220, w: 24, top: 61 },
    { n: "Sydney", v: "355820.74", x: 283, w: 24, top: 76 },
    { n: "Toronto", v: "442194.63", x: 345, w: 24, top: 39 },
  ],
};

const QUARTERS = [["Qtr4", 292], ["Qtr1", 317], ["Qtr2", 290], ["Qtr3", 293], ["Qtr4", 251], ["Qtr1", 234], ["Qtr2", 189], ["Qtr3", 158], ["Qtr4", 45]];
const lineX = (i) => 80 + i * 69;
const lineY = (v) => 196 - v * 0.447;
const LineChart = () => (
  <Chart w={677} h={256} label="Total of Shipment by years">
    <text className="title" x="337" y="22">Total of Shipment by years</text>
    {[350, 300, 250, 200, 150, 100, 50, 0].map((t, i) => (
      <text key={t} x="32" y={Math.round(39 + i * 22.3)} textAnchor="end" fontSize="15">{t}</text>
    ))}
    <path d="M45 195.500H667" stroke="#d2d5d7" />
    {Array.from({ length: 10 }, (_, i) => (
      <path key={i} d={`M${45.5 + i * 69} 195V${[0, 1, 5, 9].includes(i) ? 250 : 222}`} stroke="#d2d5d7" />
    ))}
    <polyline points={QUARTERS.map(([, v], i) => `${lineX(i)},${lineY(v)}`).join(" ")} fill="none" stroke="#1cade4" strokeWidth="2" strokeLinejoin="round" />
    {QUARTERS.map(([q, v], i) => (
      <g key={i}>
        <text x={lineX(i)} y={lineY(v) - 14} textAnchor="middle" fontSize="14">{v}</text>
        <text x={lineX(i)} y="214" textAnchor="middle" fontSize="15">{q}</text>
      </g>
    ))}
    <text x="80" y="241" textAnchor="middle" fontSize="15">2023</text>
    <text x="253" y="241" textAnchor="middle" fontSize="15">2024</text>
    <text x="529" y="241" textAnchor="middle" fontSize="15">2025</text>
  </Chart>
);

const VScroll = styled.div`
  display: flex;
  flex-direction: column;
  align-items: center;
  gap: 4px;
  width: 25px;
  padding: 4px 0 2px;
  i { flex: 1; width: 11px; margin-bottom: 8px; border-radius: 6px; background: #6f7170; }
`;
const Tri = ({ d }) => (
  <Svg w={12} h={10} stroke="none"><path d={d} fill="#616161" /></Svg>
);

/* ---------- sheet tabs and status ---------- */
const SheetTabs = styled.div`
  display: flex;
  align-items: center;
  flex: none;
  height: 40px;
  padding-left: 16px;
  border-top: 1px solid #d6d6d6;
`;
const Arrow = styled.button`
  display: flex;
  justify-content: center;
  width: 40px;
`;
const TabStrip = styled.div`
  display: flex;
  align-items: center;
  align-self: stretch;
  margin: 0 38px;
`;
const SheetTab = styled.button`
  flex: none;
  width: ${(p) => p.$w}px;
  font-size: 16px;
  text-align: center;
  ${(p) => p.$on
    ? css`
        align-self: flex-start;
        height: 35px;
        margin: 0 6px;
        padding-bottom: 4px;
        border-radius: 0 0 6px 6px;
        background: #fff;
        box-shadow: 0 1px 2px rgba(0, 0, 0, 0.25);
        font-weight: 600;
        span { padding-bottom: 2px; border-bottom: 2px solid #107c41; }
      `
    : css`
        height: 24px;
        border-right: 1px solid #c8c8c8;
        border-left: ${p.$left ? "1px solid #c8c8c8" : "0"};
      `}
`;
const HScroll = styled.div`
  display: flex;
  align-items: center;
  gap: 5px;
  width: 720px;
  height: 20px;
  margin-right: 24px;
  padding: 0 4px;
  border-radius: 8px;
  background: #f5f6f6;
  i { flex: 1; height: 11px; margin-right: 28px; border-radius: 6px; background: #6f7170; }
`;
const StatusBar = styled.footer`
  display: flex;
  align-items: center;
  flex: none;
  height: 28px;
  padding: 0 11px 0 14px;
  border-top: 2px solid #fff;
  border-bottom: 1px solid #bdbdbd;
  background: #f4f6f6;
  font-size: 12px;
`;
const StatusButton = styled.button`
  display: flex;
  align-items: center;
  gap: 4px;
  margin-left: ${(p) => p.$ml}px;
  font-weight: 700;
`;
const ViewButton = styled.button`
  display: flex;
  align-items: center;
  justify-content: center;
  width: 50px;
  height: 25px;
  background: ${(p) => (p.$on ? "#dedede" : "none")};
`;
const Spacer = styled.div`
  flex: 1;
`;
const Zoom = styled.div`
  display: flex;
  align-items: center;
  gap: 5px;
  margin-left: 6px;
  input {
    appearance: none;
    width: 126px;
    height: 14px;
    background: linear-gradient(#616161, #616161) 50% 50% / 100% 1px no-repeat,
      linear-gradient(#616161, #616161) 50% 50% / 1px 7px no-repeat;
  }
  input::-webkit-slider-thumb {
    appearance: none;
    width: 6px;
    height: 14px;
    background: #616161;
  }
  output { margin-left: 11px; }
`;

/* ---------- taskbar ---------- */
const Taskbar = styled.footer`
  display: grid;
  grid-template-columns: 1fr auto 1fr;
  align-items: center;
  flex: none;
  height: 60px;
  padding: 0 24px 0 26px;
  background: #ededed;
`;
const Weather = styled.button`
  display: flex;
  align-items: center;
  gap: 9px;
  justify-self: start;
  text-align: left;
  font-size: 14px;
  line-height: 20px;
`;
const MoonWrap = styled.span`
  position: relative;
  width: 29px;
  height: 34px;
`;
const Badge = styled.span`
  position: absolute;
  top: ${(p) => (p.$grey ? 3 : -5)}px;
  left: ${(p) => (p.$grey ? 18 : 13)}px;
  min-width: 20px;
  height: 20px;
  padding: 0 4px;
  border-radius: 10px;
  background: ${(p) => (p.$grey ? "#6e6e6e" : "#c42b1c")};
  color: #fff;
  font-size: 13px;
  line-height: 19px;
  text-align: center;
`;
const Muted = styled.span`
  display: block;
  color: #616161;
`;
const Dock = styled.div`
  display: flex;
  align-items: center;
`;
const DockButton = styled.button`
  position: relative;
  display: flex;
  align-items: center;
  justify-content: center;
  width: 48px;
  height: 48px;
  margin: 0 ${(p) => (p.$last ? 0 : 7)}px 0 0;
  border-radius: 5px;
  background: ${(p) => (p.$on ? "#f8fafa" : "none")};
  ${(p) => p.$run && css`
    &::after {
      content: "";
      position: absolute;
      bottom: 0;
      left: 50%;
      width: ${p.$run}px;
      height: 4px;
      margin-left: -${p.$run / 2}px;
      border-radius: 2px;
      background: #7a7a7a;
    }
  `}
`;
const TaskSearch = styled.label`
  display: flex;
  align-items: center;
  width: 274px;
  height: 40px;
  margin: 0 7px 0 0;
  padding: 0 5px 0 13px;
  border: 1px solid #dcdcdc;
  border-bottom-color: #bdbdbd;
  border-radius: 20px;
  background: #fafafa;
  input {
    flex: 1;
    min-width: 0;
    padding: 0 0 0 11px;
    border: 0;
    outline: 0;
    background: none;
    font-size: 16px;
  }
  input::placeholder { color: #5c5c5c; opacity: 1; }
`;
const Tray = styled.div`
  display: flex;
  align-items: center;
  justify-self: end;
`;
const TrayItem = styled.button`
  display: flex;
  align-items: center;
  justify-content: center;
  width: ${(p) => p.$w || 45}px;
  font: 19px/24px "Noto Sans CJK TC", sans-serif;
`;
const Clock = styled.time`
  margin-left: 14px;
  text-align: right;
  font-size: 14px;
  line-height: 20px;
`;
const Watermark = styled.div`
  position: fixed;
  bottom: 24px;
  left: 50%;
  width: 232px;
  margin-left: -116px;
  color: #6e6e6e;
  opacity: 0.16;
  text-align: center;
  pointer-events: none;
  white-space: nowrap;
`;
const MarkName = styled.div`
  font: 700 64px/80px "DejaVu Sans", sans-serif;
  -webkit-text-stroke: 3px #6e6e6e;
`;
const MarkUrl = styled.div`
  font: 700 38px/34px Roboto, sans-serif;
`;

const WinLogo = () => (
  <Svg w={30} h={30} stroke="none">
    <rect x="0" y="0" width="14" height="14" rx="1" fill="#35b2ea" />
    <rect x="15" y="0" width="14" height="14" rx="1" fill="#2a9fe6" />
    <rect x="0" y="15" width="14" height="14" rx="1" fill="#1583dc" />
    <rect x="15" y="15" width="14" height="14" rx="1" fill="#0a74d6" />
  </Svg>
);
const Garden = () => (
  <Svg w={62} h={32} stroke="none">
    <path d="M3 10C6-2 20 0 31 2s26-6 29 9l-3 9H5z" fill="#b9d9ee" />
    <path d="M3 10C5-1 14-1 20 3L9 14z" fill="#f3cdb0" />
    <path d="M1 20C5 8 14 7 22 11l20-1c8-4 16 1 19 9 2 6-3 10-9 10H11C3 29-1 26 1 20z" fill="#4b8a55" />
    <path d="M13 27c-1-10 6-17 18-17s19 7 17 17z" fill="#9ed9d3" />
    <path d="M18 26l2-9M24 26V13M30 26l1-13M36 26V14M43 26l-2-10M22 20l4 3M33 18l4 4" stroke="#fff" strokeWidth="1.800" />
    <circle cx="8" cy="19" r="3" fill="#23583a" /><circle cx="54" cy="20" r="4" fill="#23583a" />
    <circle cx="14" cy="12" r="3" fill="#2d4a30" /><circle cx="47" cy="11" r="3" fill="#2d4a30" />
    <circle cx="12" cy="25" r="3" fill="#77b368" /><circle cx="50" cy="26" r="3" fill="#77b368" />
    <path d="M12 28c6-2 32-2 38 0l-8 4H20z" fill="#6fb8e4" />
  </Svg>
);
const TaskView = () => (
  <Svg w={30} h={30} stroke="none">
    <rect x="0" y="8" width="23" height="21" rx="1" fill="#262626" />
    <rect x="8" y="1" width="22" height="19" rx="1" fill="#dadada" fillOpacity="0.9" />
  </Svg>
);
const Folder = () => (
  <Svg w={31} h={28} stroke="none">
    <path d="M1 2h10l3 3h16v8H1z" fill="#e39a17" />
    <path d="M0 5h31v21a2 2 0 0 1-2 2H2a2 2 0 0 1-2-2z" fill="#fbc42f" />
    <path d="M5 28v-5a3 3 0 0 1 3-3h14a3 3 0 0 1 3 3v5z" fill="#1a6fc4" />
  </Svg>
);
const Edge = () => (
  <Svg w={30} h={30} stroke="none">
    <circle cx="15" cy="15" r="15" fill="#1178cf" />
    <path d="M1 11C3 3 9 0 15 0c9 0 15 6 15 13 0 5-4 8-9 8-3 0-4-2-3-4 1-3-1-6-5-7-5-1-10 0-12 1z" fill="#2fbfd6" />
    <path d="M17 0c8 1 13 7 13 13 0 5-4 8-9 8-3 0-4-2-3-4 6-2 6-12-1-17z" fill="#5bcf6a" />
    <path d="M12 13c-4 6 0 14 8 14 3 0 5-1 7-2-3 4-8 6-13 5C6 28 4 15 12 13z" fill="#0d4f9c" />
    <path d="M18 16c-1 3 1 5 4 5 2 0 4 0 6-2-2 5-11 6-13 1-1-2 1-4 3-4z" fill="#ededed" />
  </Svg>
);
const Copilot = () => (
  <Svg w={31} h={28} stroke="none">
    <path d="M9 1h10c3 0 3 3 4 6h-8c-3 0-4 3-5 7l-2 6H4c-4 0-5-4-3-9L5 4c1-2 2-3 4-3z" fill="#2f8fe0" />
    <path d="M5 6l-4 8c-2 5 0 7 3 7h5l4-14z" fill="#67c04a" />
    <path d="M22 27H12c-3 0-3-3-4-6h8c3 0 4-3 5-7l2-6h4c4 0 5 4 3 9l-4 7c-1 2-2 3-4 3z" fill="#f0685c" />
    <path d="M26 22l4-7c2-5 0-7-3-7h-5l-4 13z" fill="#b254c9" />
    <path d="M1 16c-1 4 1 5 3 5h5l2-5z" fill="#f4c22c" />
  </Svg>
);
const Store = () => (
  <Svg w={29} h={30} stroke="none">
    <path d="M9 6V2h11v4" stroke="#39b3ea" strokeWidth="2" />
    <path d="M0 5h29v21a3 3 0 0 1-3 3H3a3 3 0 0 1-3-3z" fill="#174f93" />
    <path d="M9 12h5v5H9z" fill="#f25022" /><path d="M15 12h5v5h-5z" fill="#7fba00" />
    <path d="M9 18h5v5H9z" fill="#29a9ea" /><path d="M15 18h5v5h-5z" fill="#ffb900" />
  </Svg>
);
const Asus = () => (
  <Svg w={30} h={30} stroke="none">
    <rect width="30" height="30" fill="#1077d8" />
    <path d="M4 22L11 8h4L8 22zM12 22l7-14h7v14h-4V13l-4 9z" fill="#e8f3fc" />
  </Svg>
);
const McAfee = () => (
  <Svg w={27} h={30} stroke="none">
    <path d="M0 0l13.500 6L27 0v23l-13.500 7L0 23zM6 9v10l7.500 4 7.500-4V9l-7.500 4z" fill="#c8281e" fillRule="evenodd" />
  </Svg>
);
const WhatsApp = () => (
  <Svg w={31} h={31} stroke="#1f8a4c" strokeWidth="3">
    <path d="M2 29l2-7C-2 8 12-1 22 4c9 5 8 17 0 21-5 3-9 2-13 1z" />
    <path d="M10 9c-3 6 5 13 11 12l2-3-4-2-2 1-4-4 1-2-2-3z" fill="#1f8a4c" stroke="none" />
  </Svg>
);

export default function App() {
  return (
    <Page>
      <Global />
      <TitleBar>
        <Quick>
          <ExcelLogo />
          <AutoSave>
            AutoSave
            <SwitchBox><input type="checkbox" role="switch" />Off</SwitchBox>
          </AutoSave>
          <QuickButton aria-label="Save">
            <Svg w={20} h={20} stroke="#a63db0" strokeWidth="2">
              <path d="M1 1h18v18H3l-2-2z" fill="#dba8df" />
              <path d="M5 1h10v7H5z" fill="#f7f7f7" /><path d="M6 19v-6h8v6z" fill="#f7f7f7" />
            </Svg>
          </QuickButton>
          <QuickButton aria-label="Undo"><Undo /><Chev /></QuickButton>
          <QuickButton aria-label="Redo"><Undo flip color="#b0b0b0" /><Chev color="#b0b0b0" /></QuickButton>
          <QuickButton aria-label="Customise toolbar">
            <Svg w={20} h={12}><path d="M4 2h9M5 6l3.500 3.500L12 6" /></Svg>
          </QuickButton>
          <DocName>shipment <Chev w={13} /></DocName>
        </Quick>
        <SearchBox>
          <Svg w={20} h={20} strokeWidth="1.200" stroke="#616161"><circle cx="12" cy="7.500" r="6" /><path d="M8 12l-7 7" /></Svg>
          <input type="search" placeholder="Search" aria-label="Search" />
        </SearchBox>
        <WindowTools>
          <Avatar>HH</Avatar>
          <WindowButton aria-label="Minimise"><Svg w={12} h={12}><path d="M0 6h12" /></Svg></WindowButton>
          <WindowButton aria-label="Restore"><Svg w={14} h={14}><rect x="1" y="3.500" width="9" height="9" rx="2" /><path d="M4 1.500h5a3 3 0 0 1 3 3v5" /></Svg></WindowButton>
          <WindowButton aria-label="Close"><Svg w={14} h={14}><path d="M1 1l12 12M13 1L1 13" /></Svg></WindowButton>
        </WindowTools>
      </TitleBar>

      <TabBar>
        {["File", "Home", "Insert", "Draw", "Page Layout", "Formulas", "Data", "Review", "View", "Automate", "Developer", "Help", "Easy QR Code and Barcode"].map((t) => (
          <MenuTab key={t} $active={t === "Home"}>{t}</MenuTab>
        ))}
        <TabActions>
          <ActionButton><Svg w={14} h={14}><path d="M1 1h12v9H6l-3 3v-3H1z" /></Svg>Comments</ActionButton>
          <ActionButton $primary>
            <Svg w={15} h={15} stroke="#fff"><path d="M5 4H1v10h12v-4M4 10c0-4 2-6 6-6V1l4 4.500-4 4V7c-3 0-5 1-6 3z" /></Svg>
            Share <Chev color="#fff" />
          </ActionButton>
        </TabActions>
      </TabBar>

      <RibbonShell>
        <RibbonBar />
        <Notice>
          <Svg w={20} h={20} stroke="#1f7bc8"><circle cx="10" cy="10" r="9" fill="#f4faff" /><path d="M10 8.500v6M10 5v2" strokeWidth="2" /></Svg>
          <NoticeHead>PRODUCT NOTICE</NoticeHead>
          <span>There was a problem checking this device's license status. Please sign in with the Microsoft 365 account this device was activated with.</span>
          <SignIn><u>S</u>ign In</SignIn>
          <button aria-label="Dismiss"><Svg w={12} h={12}><path d="M1 1l10 10M11 1L1 11" /></Svg></button>
        </Notice>
      </RibbonShell>

      <FormulaBar>
        <Field $w={126}><input aria-label="Name box" defaultValue="U53" /><Chev w={13} /></Field>
        <Dots><i /><i /><i /></Dots>
        <FxBox>
          <button aria-label="Cancel"><Svg w={16} h={16} stroke="#b5b5b5"><path d="M1 1l14 14M15 1L1 15" /></Svg></button>
          <button aria-label="Enter"><Svg w={20} h={16} stroke="#b5b5b5"><path d="M1 9l6 6L19 2" /></Svg></button>
          <button aria-label="Insert function"><Glyph $serif $italic $size={22}>fx</Glyph></button>
          <Chev w={13} color="#8a8a8a" />
        </FxBox>
        <Field><input aria-label="Formula" /><Chev w={13} /></Field>
      </FormulaBar>

      <Work>
        <Sheet>
          <ColumnHeads>
            <Corner><Svg w={6} h={6} stroke="none"><path d="M6 0v6H0z" fill="#cfcfcf" /></Svg></Corner>
            {COLS.map(([c, w]) => <HeadCell key={c} $w={w} $on={c === "U"}>{c}</HeadCell>)}
          </ColumnHeads>
          <SheetBody>
            <RowHeads>
              {Array.from({ length: 53 }, (_, i) => <RowCell key={i} $on={i === 52}>{i + 1}</RowCell>)}
            </RowHeads>
            <Cells>
              <Filled>
                <SlicerColumn>
                  <Slicer title="Years (Ship_Date)" items={["2023", "2024", "2025"]} indent={7} w={149} after={22} />
                  <Slicer title="Status" items={["Delayed", "Delivered", "In Transit", "Returned"]} indent={4} w={145} after={18} />
                  <Slicer title="Origin" items={["Berlin", "Cairo", "London", "Mumbai", "New York"]} indent={0} w={140} after={0} />
                </SlicerColumn>
                <Board>
                  <KpiRow>
                    {KPIS.map((k) => (
                      <Kpi key={k.label} $w={k.w} $gap={k.gap}>
                        <KpiSlot><KpiLabel $h={k.h} $pad={k.pad}>{k.label}</KpiLabel></KpiSlot>
                        <KpiValue $pad={k.vpad}>{k.value}</KpiValue>
                      </Kpi>
                    ))}
                  </KpiRow>
                  <ChartRow $indent={35}>
                    <PieChart />
                    <BarChart {...WEIGHT} />
                    <RingChart />
                  </ChartRow>
                  <ChartRow $indent={36}>
                    <LineChart />
                    <BarChart {...COST} />
                  </ChartRow>
                </Board>
              </Filled>
              <ActiveCell />
            </Cells>
          </SheetBody>
        </Sheet>
        <VScroll>
          <Tri d="M6 1l5 8H1z" />
          <i />
          <Tri d="M6 9l5-8H1z" />
        </VScroll>
      </Work>

      <SheetTabs>
        <Arrow aria-label="Previous sheet"><Svg w={10} h={14} stroke="#9a9a9a"><path d="M8 1L2 7l6 6" /></Svg></Arrow>
        <Arrow aria-label="Next sheet"><Svg w={10} h={14} stroke="#9a9a9a"><path d="M2 1l6 6-6 6" /></Svg></Arrow>
        <TabStrip>
          <SheetTab $w={125}>pivot tables</SheetTab>
          <SheetTab $w={107} $on><span>Dashboard</span></SheetTab>
          <SheetTab $w={106} $left>shipment</SheetTab>
        </TabStrip>
        <Arrow aria-label="New sheet"><Svg w={16} h={16}><path d="M8 1v14M1 8h14" /></Svg></Arrow>
        <Spacer />
        <Dots $r={19}><i /><i /><i /></Dots>
        <HScroll>
          <Tri d="M10 0v10L2 5z" />
          <i />
          <Tri d="M2 0v10l8-5z" />
        </HScroll>
      </SheetTabs>

      <StatusBar>
        Ready
        <StatusButton $ml={28} aria-label="Macro recording">
          <Svg w={18} h={18}><path d="M16 8V1H1v15h6M1 5h15M4 8h3M4 11h2" /><circle cx="12" cy="12" r="4.500" /><circle cx="12" cy="12" r="1.500" fill="#424242" /></Svg>
        </StatusButton>
        <StatusButton $ml={22}>
          <Svg w={19} h={18}><circle cx="8" cy="3" r="2" /><path d="M2 5l4 2v4l-3 6M14 5l-4 2v3M6 7h4M7 12l2 3M11 10l7 7M18 10l-7 7" /></Svg>
          Accessibility: Investigate
        </StatusButton>
        <Spacer />
        <ViewButton $on aria-label="Normal view"><Svg w={18} h={18}><path d="M1 1h16v16H1zM6.500 1v16M11.500 1v16M1 6.500h16M1 11.500h16" strokeWidth="1.500" /></Svg></ViewButton>
        <ViewButton aria-label="Page layout view"><Svg w={18} h={18}><path d="M1 1h16v16H1zM5 4h8v10H5zM7 7h4M7 9h4M7 11h4" /></Svg></ViewButton>
        <ViewButton aria-label="Page break view"><Svg w={18} h={18}><path d="M1 1h16v16H1zM1 10h10V1M6 1v9M11 5v5" strokeWidth="1.500" /></Svg></ViewButton>
        <Zoom>
          <button aria-label="Zoom out"><Svg w={12} h={12}><path d="M1 6h10" /></Svg></button>
          <input type="range" aria-label="Zoom" min="0" max="100" defaultValue="25" />
          <button aria-label="Zoom in"><Svg w={12} h={12}><path d="M1 6h10M6 1v10" /></Svg></button>
          <output>54%</output>
        </Zoom>
      </StatusBar>

      <Taskbar>
        <Weather>
          <MoonWrap>
            <Svg w={29} h={34} stroke="none"><path d="M25 10c3 10-4 18-12 18-6 0-11-3-13-9 11 3 20-1 21-11z" fill="#e89a24" /></Svg>
            <Badge>1</Badge>
          </MoonWrap>
          <span>20°C<Muted lang="ar" dir="rtl">سماء صافية</Muted></span>
        </Weather>
        <Dock>
          <DockButton aria-label="Start"><WinLogo /></DockButton>
          <TaskSearch>
            <Svg w={20} h={20} strokeWidth="2" stroke="#333"><circle cx="8.500" cy="8.500" r="7" /><path d="M13.500 13.500L19 19" /></Svg>
            <input type="search" placeholder="Search" aria-label="Search Windows" />
            <Garden />
          </TaskSearch>
          <DockButton aria-label="Task view"><TaskView /></DockButton>
          <DockButton aria-label="File Explorer"><Folder /></DockButton>
          <DockButton $run={7} aria-label="Edge"><Edge /></DockButton>
          <DockButton aria-label="Copilot"><Copilot /></DockButton>
          <DockButton aria-label="Store"><Store /></DockButton>
          <DockButton aria-label="MyASUS"><Asus /></DockButton>
          <DockButton aria-label="McAfee"><McAfee /></DockButton>
          <DockButton $run={7} aria-label="WhatsApp"><WhatsApp /><Badge $grey>99+</Badge></DockButton>
          <DockButton $on $last $run={20} aria-label="Excel"><ExcelLogo w={27} h={28} /></DockButton>
        </Dock>
        <Tray>
          <TrayItem $w={30} aria-label="Hidden icons"><Svg w={14} h={10} strokeWidth="1.800"><path d="M1 8l6-6 6 6" /></Svg></TrayItem>
          <TrayItem $w={50} aria-label="OneDrive"><Svg w={20} h={20} stroke="#7a7a7a"><path d="M4 14c-5-1-4-8 1-8 2-6 11-5 11 1 3 1 3 4 1 6z" fill="#c9c9c9" /><circle cx="14" cy="13" r="6" fill="#0a74d6" stroke="none" /><path d="M14 12v4M14 9v1.500" stroke="#fff" strokeWidth="1.600" /></Svg></TrayItem>
          <TrayItem $w={32} aria-label="Updates"><Svg w={20} h={22}><path d="M1 9C3 0 15-1 18 6M18 1v6h-6M2 20v-6h6M2 15c2 4 5 5 8 5" strokeWidth="1.500" /><circle cx="15" cy="16" r="5" fill="#e8931e" stroke="none" /></Svg></TrayItem>
          <TrayItem lang="zh-Hant">英</TrayItem>
          <TrayItem $w={52} lang="zh-Hant">速</TrayItem>
          <TrayItem $w={42} aria-label="Wi-Fi"><Svg w={20} h={16} strokeWidth="1.500"><path d="M1 6c5-6 13-6 18 0M4 9.500c3-4 9-4 12 0M7 12.500c2-2 4-2 6 0" /><circle cx="10" cy="14.500" r="1" fill="#333" /></Svg></TrayItem>
          <TrayItem $w={20} aria-label="Volume"><Svg w={21} h={18}><path d="M1 6h4l5-5v16l-5-5H1zM13 6c1 2 1 4 0 6M16 4c2 3 2 7 0 10M18.500 2c3 4 3 10 0 14" /></Svg></TrayItem>
          <TrayItem $w={44} aria-label="Battery"><Svg w={25} h={13}><rect x="1" y="1" width="20" height="11" rx="3.500" strokeWidth="1.500" /><rect x="3" y="3" width="16" height="7" rx="2" fill="#222" /><path d="M23.500 4v5" strokeWidth="2" /></Svg></TrayItem>
          <Clock>1:54 AM<br />5/9/2026</Clock>
        </Tray>
      </Taskbar>

      <Watermark>
        <MarkName lang="ar">مستقل</MarkName>
        <MarkUrl>mostaql.com</MarkUrl>
      </Watermark>
    </Page>
  );
}
